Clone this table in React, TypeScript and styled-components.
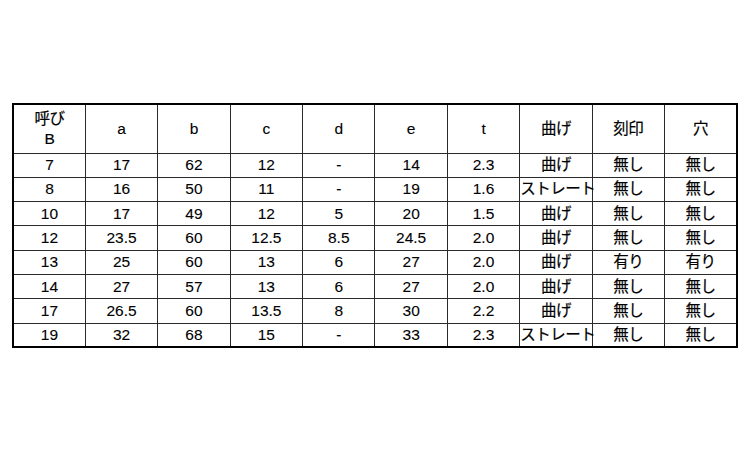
import React from "react";
import styled, { createGlobalStyle } from "styled-components";

const GlobalStyle = createGlobalStyle`
  body {
    margin: 0;
    background: #ffffff;
    font-family: "Liberation Sans", "Noto Sans CJK JP", sans-serif;
  }
`;

const headers = ["a", "b", "c", "d", "e", "t", "曲げ", "刻印", "穴"];

const rows = [
  ["7", "17", "62", "12", "-", "14", "2.3", "曲げ", "無し", "無し"],
  ["8", "16", "50", "11", "-", "19", "1.6", "ストレート", "無し", "無し"],
  ["10", "17", "49", "12", "5", "20", "1.5", "曲げ", "無し", "無し"],
  ["12", "23.5", "60", "12.5", "8.5", "24.5", "2.0", "曲げ", "無し", "無し"],
  ["13", "25", "60", "13", "6", "27", "2.0", "曲げ", "有り", "有り"],
  ["14", "27", "57", "13", "6", "27", "2.0", "曲げ", "無し", "無し"],
  ["17", "26.5", "60", "13.5", "8", "30", "2.2", "曲げ", "無し", "無し"],
  ["19", "32", "68", "15", "-", "33", "2.3", "ストレート", "無し", "無し"],
];

const Page = styled.div`
  padding: 103px 12px 0 12px;
`;

const Table = styled.table`
  width: 726px;
  table-layout: fixed;
  border-collapse: collapse;
  border: 2px solid #000;
  color: #000;
  font-size: 15.5px;
`;

const HeadRow = styled.tr`
  height: 49px;
`;

const BodyRow = styled.tr`
  height: 24.3px;
`;

const Cell = styled.td<{ $jp?: boolean }>`
  border: 1px solid #2a2a2a;
  padding: 0;
  text-align: center;
  vertical-align: middle;
  line-height: 20px;
  white-space: nowrap;
  letter-spacing: ${(p) => (p.$jp ? "-0.5px" : "0")};
  -webkit-text-stroke: ${(p) => (p.$jp ? "0.2px" : "0.1px")} #000;
`;

const isJp = (s: string) => /[^\x00-\x7f]/.test(s);

export default function App() {
  return (
    <Page>
      <GlobalStyle />
      <Table>
        <tbody>
          <HeadRow>
            <Cell $jp>
              呼び
              <br />B
            </Cell>
            {headers.map((h) => (
              <Cell key={h} $jp={isJp(h)}>
                {h}
              </Cell>
            ))}
          </HeadRow>
          {rows.map((r, i) => (
            <BodyRow key={i}>
              {r.map((v, j) => (
                <Cell key={j} $jp={isJp(v)}>
                  {v}
                </Cell>
              ))}
            </BodyRow>
          ))}
        </tbody>
      </Table>
    </Page>
  );
}
